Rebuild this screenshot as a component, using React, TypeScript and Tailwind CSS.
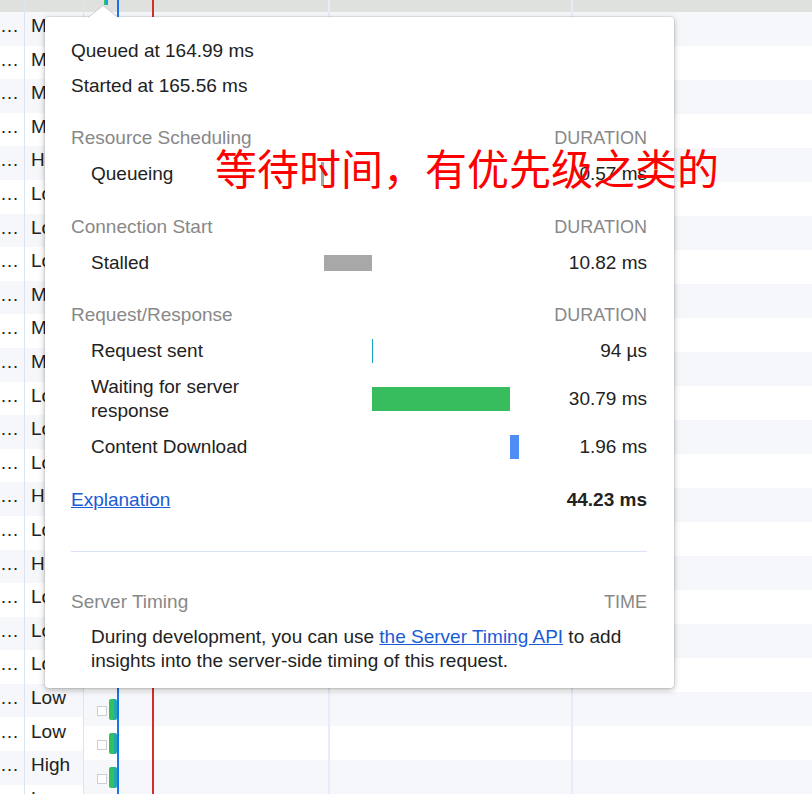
import type { ReactNode } from "react";

const PRIORITIES = [
  "Medium", "Medium", "Medium", "Medium", "High", "Low", "Low", "Low",
  "Medium", "Medium", "Medium", "Low", "Low", "Low", "High", "Low",
  "High", "Low", "Low", "Low", "Low", "Low", "High", "Low",
];

const TOTAL = 44.23;
const BAR_WIDTH = 198;
const SCALE = BAR_WIDTH / TOTAL;

interface Phase {
  label: ReactNode;
  start: number;
  dur: number;
  value: string;
  color: string;
  barH: number;
  minW?: number;
  tall?: boolean;
}

interface Section {
  title: string;
  gap: string;
  phases: Phase[];
}

const SECTIONS: Section[] = [
  {
    title: "Resource Scheduling",
    gap: "mt-[16px]",
    phases: [{ label: "Queueing", start: 0, dur: 0.57, value: "0.57 ms", color: "#a3a3a3", barH: 24, minW: 2 }],
  },
  {
    title: "Connection Start",
    gap: "mt-[17px]",
    phases: [{ label: "Stalled", start: 0.57, dur: 10.82, value: "10.82 ms", color: "#a8a8a8", barH: 16 }],
  },
  {
    title: "Request/Response",
    gap: "mt-[16px]",
    phases: [
      { label: "Request sent", start: 11.39, dur: 0.094, value: "94 µs", color: "#14a0c4", barH: 24, minW: 1.5 },
      {
        label: (
          <>
            Waiting for server
            <br />
            response
          </>
        ),
        start: 11.484,
        dur: 30.79,
        value: "30.79 ms",
        color: "#37bd5e",
        barH: 24,
        tall: true,
      },
      { label: "Content Download", start: 42.274, dur: 1.96, value: "1.96 ms", color: "#4f8cf6", barH: 24 },
    ],
  },
];

export default function App() {
  return (
    <div className="relative h-[794px] w-[812px] overflow-hidden bg-white font-['Liberation_Sans',Arial,sans-serif] text-[19px] text-[#222]">
      <div className="flex">
        <div className="w-[25px] shrink-0 border-r border-[#dbe4f4]">
          <div className="h-[12px] bg-[#dfe1de]" />
          {PRIORITIES.map((_, i) => (
            <div key={i} className={`flex h-[33.6px] items-center overflow-hidden whitespace-nowrap pb-[5px] ${i % 2 === 0 ? "bg-[#f5f7fa]" : "bg-white"}`}>
              …
            </div>
          ))}
        </div>
        <div className="w-[59px] shrink-0 border-r border-[#dbe4f4]">
          <div className="h-[12px] bg-[#dfe1de]" />
          {PRIORITIES.map((p, i) => (
            <div key={i} className={`flex h-[33.6px] items-center overflow-hidden whitespace-nowrap pb-[5px] pl-[6px] ${i % 2 === 0 ? "bg-[#f5f7fa]" : "bg-white"}`}>
              {p}
            </div>
          ))}
        </div>
        <Waterfall />
      </div>

      <Tooltip />

      <svg className="absolute left-[87px] top-[4px]" width="32" height="16" viewBox="0 0 32 16">
        <polygon points="1,14 16,1.5 31,14 31,16 1,16" fill="#fff" />
        <polyline points="1,13.5 16,1.5 31,13.5" fill="none" stroke="#cfcfcf" strokeWidth="1" />
      </svg>

      <div className="absolute left-[215px] top-[146px] whitespace-nowrap font-['Noto_Sans_CJK_SC',sans-serif] text-[42px] leading-none text-[#ff0000]">
        等待时间，有优先级之类的
      </div>
    </div>
  );
}

function Waterfall() {
  return (
    <div className="relative flex-1">
      <div className="h-[12px] bg-[#dfe1de]" />
      {Array.from({ length: 23 }).map((_, i) => (
        <div key={i} className={`flex h-[34px] items-center ${i % 2 === 0 ? "bg-[#f5f7fa]" : "bg-white"}`}>
          <div className="ml-[13px] mt-[4px] h-[10px] w-[10px] border border-[#cfcfcf] bg-white" />
          <div className="ml-[2px] flex h-[21px] w-[8px] overflow-hidden rounded-[2px]">
            <div className="w-[5px] bg-[#34c15a]" />
            <div className="w-[3px] bg-[#1fa8b8]" />
          </div>
        </div>
      ))}
      <div className="absolute left-[20px] top-0 flex h-[5px] w-[4px]">
        <div className="w-[2px] bg-[#34c15a]" />
        <div className="w-[2px] bg-[#1a9de0]" />
      </div>
      <div className="absolute bottom-0 left-[244px] top-0 w-[2px] bg-[#e6ecf8]" />
      <div className="absolute bottom-0 left-[487px] top-0 w-[2px] bg-[#e6ecf8]" />
      <div className="absolute bottom-0 left-[33px] top-0 w-[2px] bg-[#1a73e8]" />
      <div className="absolute bottom-0 left-[68px] top-0 w-[1.5px] bg-[#d32f2f]" />
    </div>
  );
}

function Tooltip() {
  return (
    <div className="absolute left-[45px] top-[17px] w-[629px] rounded-[4px] bg-white pb-[15px] pl-[26px] pr-[27px] pt-[17px] shadow-[0_0_0_1px_rgba(0,0,0,0.06),0_2px_6px_rgba(0,0,0,0.28)]">
      <div className="flex h-[35px] items-center">Queued at 164.99 ms</div>
      <div className="flex h-[35px] items-center">Started at 165.56 ms</div>

      {SECTIONS.map((s) => (
        <div key={s.title} className={s.gap}>
          <div className="flex h-[36px] items-center justify-between text-[#888]">
            <span>{s.title}</span>
            <span className="text-[18px]">DURATION</span>
          </div>
          {s.phases.map((p, i) => (
            <PhaseRow key={i} phase={p} />
          ))}
        </div>
      ))}

      <div className="mt-[17px] flex h-[36px] items-center justify-between">
        <a className="cursor-pointer text-[#1a5bd6] underline">Explanation</a>
        <span className="font-bold">44.23 ms</span>
      </div>

      <div className="mt-[33px] border-t border-[#d9e5f7]" />

      <div className="mt-[32px] flex h-[36px] items-center justify-between text-[#888]">
        <span>Server Timing</span>
        <span className="text-[18px]">TIME</span>
      </div>
      <p className="mt-[5px] pl-[20px] leading-[24px]">
        During development, you can use <a className="cursor-pointer text-[#1a5bd6] underline">the Server Timing API</a> to add
        <br />
        insights into the server-side timing of this request.
      </p>
    </div>
  );
}

function PhaseRow({ phase }: { phase: Phase }) {
  const left = phase.start * SCALE;
  const width = Math.max(phase.dur * SCALE, phase.minW ?? 1);
  return (
    <div className={`flex items-center py-[6px] ${phase.tall ? "h-[60px]" : "h-[36px]"}`}>
      <div className="w-[250px] shrink-0 pl-[20px] leading-[24px]">{phase.label}</div>
      <div className="flex w-[198px] shrink-0 items-center">
        <div style={{ marginLeft: left, width, height: phase.barH, backgroundColor: phase.color }} />
      </div>
      <div className="flex-1 text-right">{phase.value}</div>
    </div>
  );
}
